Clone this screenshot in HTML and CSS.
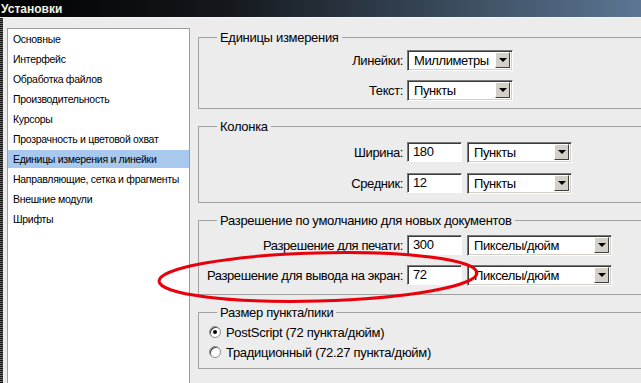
FILE: index.html
```
<!DOCTYPE html>
<html lang="ru">
<head>
<meta charset="utf-8">
<title>Установки</title>
<link rel="stylesheet" href="styles.css">
</head>
<body>
<div class="titlebar"><span class="title">Установки</span></div>
<div class="window">
  <ul class="nav">
    <li>Основные</li>
    <li>Интерфейс</li>
    <li>Обработка файлов</li>
    <li>Производительность</li>
    <li>Курсоры</li>
    <li>Прозрачность и цветовой охват</li>
    <li class="active">Единицы измерения и линейки</li>
    <li>Направляющие, сетка и фрагменты</li>
    <li>Внешние модули</li>
    <li>Шрифты</li>
  </ul>
  <div class="panel">
    <fieldset class="group g1">
      <legend>Единицы измерения</legend>
      <div class="rows rows-units">
        <div class="row"><span class="label">Линейки:</span><div class="select w106"><span class="val">Миллиметры</span><span class="arrow"></span></div></div>
        <div class="row"><span class="label">Текст:</span><div class="select w106"><span class="val">Пункты</span><span class="arrow"></span></div></div>
      </div>
    </fieldset>
    <fieldset class="group">
      <legend>Колонка</legend>
      <div class="rows rows-column">
        <div class="row"><span class="label">Ширина:</span><div class="input">180</div><div class="select w105"><span class="val">Пункты</span><span class="arrow"></span></div></div>
        <div class="row"><span class="label">Средник:</span><div class="input">12</div><div class="select w105"><span class="val">Пункты</span><span class="arrow"></span></div></div>
      </div>
    </fieldset>
    <fieldset class="group">
      <legend>Разрешение по умолчанию для новых документов</legend>
      <div class="rows">
        <div class="row"><span class="label">Разрешение для печати:</span><div class="input">300</div><div class="select w145"><span class="val">Пикселы/дюйм</span><span class="arrow"></span></div></div>
        <div class="row"><span class="label">Разрешение для вывода на экран:</span><div class="input">72</div><div class="select w145"><span class="val">Пикселы/дюйм</span><span class="arrow"></span></div></div>
      </div>
    </fieldset>
    <fieldset class="group g4">
      <legend>Размер пункта/пики</legend>
      <div class="radios">
        <div class="radio-row"><span class="radio checked"></span><span>PostScript (72 пункта/дюйм)</span></div>
        <div class="radio-row"><span class="radio"></span><span>Традиционный (72.27 пункта/дюйм)</span></div>
      </div>
    </fieldset>
  </div>
</div>
<svg class="mark" width="641" height="383" viewBox="0 0 641 383">
  <ellipse cx="318" cy="277" rx="159" ry="24" fill="none" stroke="#e8000c" stroke-width="3" transform="rotate(-1.5 318 277)"/>
</svg>
</body>
</html>
```
FILE: styles.css
```
* { box-sizing: border-box; }
html, body {
  margin: 0;
  padding: 0;
  width: 641px;
  height: 383px;
  overflow: hidden;
  background: #ececec;
  font-family: "Liberation Sans", Arial, sans-serif;
  color: #000;
}
.titlebar {
  height: 18px;
  background: linear-gradient(to right, #000 0%, #14181c 35%, #3a4a5c 70%, #5c7694 100%);
  display: flex;
  align-items: center;
  padding-left: 1px;
  border-bottom: 1px solid #f4f4f4;
}
.title {
  color: #f3f1e4;
  font-weight: bold;
  font-size: 12px;
}
.window {
  display: flex;
  align-items: flex-start;
  gap: 8px;
  height: 365px;
  overflow: hidden;
  padding: 10px 0 0 4px;
  border-left: 3px solid transparent;
  border-image: repeating-linear-gradient(to bottom, #111 0 1px, #6a6a6a 1px 2px) 0 0 0 3;
  border-image-width: 0 0 0 3px;
}
.nav {
  list-style: none;
  margin: 0;
  padding: 1px 0 0 0;
  width: 183px;
  height: 380px;
  flex: none;
  background: #fff;
  border: 1px solid #9c9c9c;
  font-size: 10.5px;
  letter-spacing: -0.3px;
}
.nav li {
  height: 18px;
  line-height: 18px;
  margin-bottom: 2px;
  padding-left: 5px;
  white-space: nowrap;
}
.nav li.active { background: #a8c8ee; }
.panel {
  display: flex;
  flex-direction: column;
  gap: 10px;
  width: 470px;
  flex: none;
  margin-top: 2px;
}
.group {
  margin: 0;
  padding: 0 0 9px 0;
  border: 1px solid #a2a2a2;
  min-width: 0;
}
.g1 { padding-bottom: 8px; }
.g4 { padding-bottom: 6px; }
.group legend {
  margin-left: 18px;
  padding: 0 3px;
  font-size: 13px;
  line-height: 15px;
  letter-spacing: -0.3px;
}
.rows {
  display: flex;
  flex-direction: column;
  gap: 10px;
  padding-top: 7px;
}
.rows-units { padding-top: 5px; }
.rows-column { padding-top: 8px; gap: 11px; }
.row {
  display: flex;
  align-items: center;
  gap: 4px;
  height: 20px;
  font-size: 13px;
  letter-spacing: -0.4px;
}
.row .label {
  width: 204px;
  text-align: right;
  white-space: nowrap;
}
.input {
  width: 55px;
  height: 20px;
  margin-right: 1px;
  background: #fff;
  border-top: 1px solid #7a7a7a;
  border-left: 1px solid #7a7a7a;
  border-right: 1px solid #fff;
  border-bottom: 1px solid #fff;
  box-shadow: inset 1px 1px 0 #3a3a3a;
  padding-left: 5px;
  line-height: 18px;
}
.select {
  display: flex;
  align-items: center;
  height: 21px;
  background: #fff;
  border-top: 1px solid #7a7a7a;
  border-left: 1px solid #7a7a7a;
  border-right: 1px solid #fff;
  border-bottom: 1px solid #fff;
  box-shadow: inset 1px 1px 0 #3a3a3a, inset -1px -1px 0 #d4d0c8;
  padding: 1px 2px 1px 1px;
}
.w106 { width: 106px; }
.w105 { width: 105px; }
.w145 { width: 145px; }
.val {
  flex: 1;
  padding-left: 5px;
  white-space: nowrap;
}
.arrow {
  width: 15px;
  height: 16px;
  flex: none;
  background: #d4d0c8;
  border-top: 1px solid #fff;
  border-left: 1px solid #fff;
  border-right: 1px solid #404040;
  border-bottom: 1px solid #404040;
  display: flex;
  align-items: center;
  justify-content: center;
}
.arrow::after {
  content: "";
  border-left: 4px solid transparent;
  border-right: 4px solid transparent;
  border-top: 4px solid #000;
}
.radios {
  display: flex;
  flex-direction: column;
  padding: 2px 0 0 10px;
  font-size: 13px;
  letter-spacing: -0.3px;
}
.radio-row {
  display: flex;
  align-items: center;
  gap: 5px;
  height: 20px;
}
.radio {
  width: 12px;
  height: 12px;
  border-radius: 50%;
  background: #fff;
  border: 1px solid #8a8a8a;
  box-shadow: inset 1px 1px 0 #404040;
  position: relative;
  flex: none;
}
.radio.checked::after {
  content: "";
  position: absolute;
  left: 3px;
  top: 3px;
  width: 4px;
  height: 4px;
  border-radius: 50%;
  background: #000;
}
.mark {
  position: absolute;
  left: 0;
  top: 0;
  pointer-events: none;
}
```
